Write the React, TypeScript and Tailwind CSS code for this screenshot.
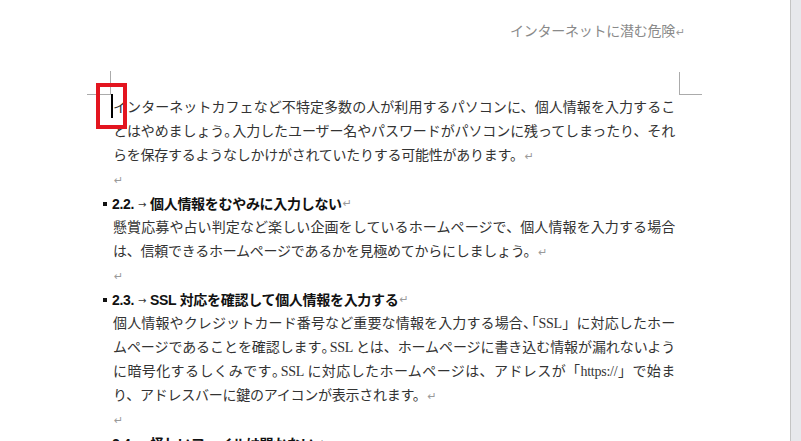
import type { ReactNode } from 'react'

// paragraph mark shown with formatting marks on
function Ret() {
  return <span className="ml-[1px] font-['DejaVu_Sans',sans-serif] text-[11px] font-normal text-[#9a9a9a]">↵</span>
}

function H({ c }: { c: string }) {
  return <span className="tracking-[-6px]">{c}</span>
}

function Line({ children, full }: { children: ReactNode; full?: boolean }) {
  return (
    <div
      className={`h-[24px] leading-[24px] ${full ? 'text-justify [text-align-last:justify]' : ''}`}
    >
      {children}
    </div>
  )
}

function Heading({ num, children }: { num: string; children: ReactNode }) {
  return (
    <div className="-ml-[10px] flex h-[24px] items-center font-['Liberation_Sans','Noto_Sans_CJK_JP',sans-serif] font-bold text-[#111] tracking-[-0.3px]">
      <span className="mr-[5px] h-[4px] w-[4px] shrink-0 bg-[#111]" />
      <span className="w-[26px] shrink-0">{num}</span>
      <span className="flex w-[12px] shrink-0 justify-start font-['DejaVu_Sans',sans-serif] text-[10px] font-normal text-[#333]">→</span>
      <span>{children}</span>
      <Ret />
    </div>
  )
}

export default function App() {
  return (
    <div className="flex h-[441px] w-[801px] overflow-hidden bg-white">
      <div className="relative flex-1">
        {/* Header */}
        <div className="pt-[22px] pr-[105px] text-right font-['Liberation_Serif','Noto_Sans_CJK_JP',serif] text-[14px] leading-[20px] tracking-[-0.25px] text-[#8a8a8a]">
          インターネットに潜む危険<Ret />
        </div>

        {/* Body */}
        <div className="ml-[113px] mt-[53px] w-[562px] font-['Liberation_Serif','Noto_Sans_CJK_JP',serif] text-[14px] tracking-[-0.25px] text-[#333]">
          <Line full>インターネットカフェなど不特定多数の人が利用するパソコンに、個人情報を入力するこ</Line>
          <Line full>
            とはやめましょう<H c="。" />入力したユーザー名やパスワードがパソコンに残ってしまったり、それ
          </Line>
          <Line>
            らを保存するようなしかけがされていたりする可能性があります。<Ret />
          </Line>
          <Line>
            <Ret />
          </Line>

          <Heading num="2.2.">個人情報をむやみに入力しない</Heading>
          <Line full>懸賞応募や占い判定など楽しい企画をしているホームページで、個人情報を入力する場合</Line>
          <Line>
            は、信頼できるホームページであるかを見極めてからにしましょう。<Ret />
          </Line>
          <Line>
            <Ret />
          </Line>

          <Heading num="2.3.">SSL 対応を確認して個人情報を入力する</Heading>
          <Line full>
            個人情報やクレジットカード番号など重要な情報を入力する場合<H c="、" />「SSL」に対応したホー
          </Line>
          <Line full>
            ムページであることを確認します<H c="。" />SSL とは、ホームページに書き込む情報が漏れないよう
          </Line>
          <Line full>
            に暗号化するしくみです<H c="。" />SSL に対応したホームページは、アドレスが「https://」で始ま
          </Line>
          <Line>
            り、アドレスバーに鍵のアイコンが表示されます。<Ret />
          </Line>
          <Line>
            <Ret />
          </Line>

          <Heading num="2.4.">怪しいファイルは開かない</Heading>
        </div>

        {/* crop marks */}
        <div className="absolute left-[110px] top-[71px] h-[23px] w-px bg-[#ababab]" />
        <div className="absolute left-[87px] top-[94px] h-px w-[24px] bg-[#ababab]" />
        <div className="absolute left-[679px] top-[72px] h-[22px] w-px bg-[#ababab]" />
        <div className="absolute left-[679px] top-[94px] h-px w-[23px] bg-[#ababab]" />

        {/* caret + highlight box */}
        <div className="absolute left-[111px] top-[94px] h-[24px] w-[1.5px] bg-black" />
        <div className="absolute left-[96px] top-[83px] h-[46px] w-[31px] border-[4px] border-[#e3151f]" />
      </div>
      <div className="w-[11px] border-l border-[#c4c4c4] bg-[#e7e8ec]" />
    </div>
  )
}
